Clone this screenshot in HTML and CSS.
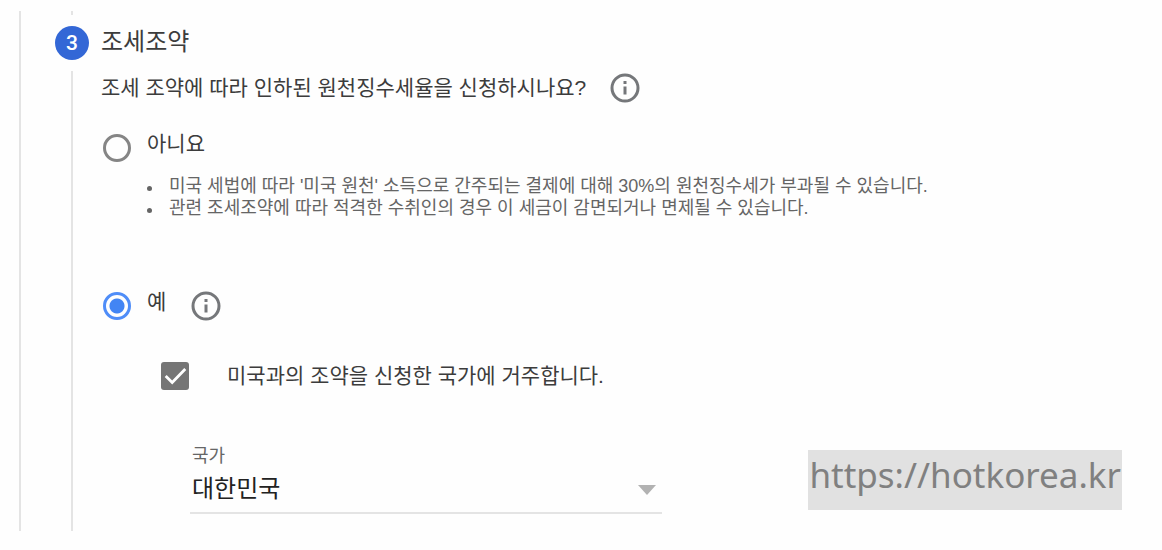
FILE: index.html
```html
<!DOCTYPE html>
<html lang="ko">
<head>
<meta charset="utf-8">
<title>조세조약</title>
<link rel="stylesheet" href="styles.css">
</head>
<body>
<main class="panel">
  <section class="step">
    <div class="rail">
      <span class="rail-line rail-top"></span>
      <span class="step-number">3</span>
      <span class="rail-line rail-rest"></span>
    </div>
    <form class="content">
      <h2 class="title">조세조약</h2>
      <div class="question">
        <span id="question">조세 조약에 따라 인하된 원천징수세율을 신청하시나요?</span>
        <button class="info" type="button" aria-label="도움말">
          <svg viewBox="0 0 30 30"><circle cx="15" cy="15" r="13"/><path d="M15 13.500v8M15 8v3"/></svg>
        </button>
      </div>
      <div class="option">
        <input class="radio" type="radio" name="treaty" id="no">
        <label class="option-label" for="no">아니요</label>
      </div>
      <ul class="notes">
        <li>미국 세법에 따라 '미국 원천' 소득으로 간주되는 결제에 대해 30%의 원천징수세가 부과될 수 있습니다.</li>
        <li>관련 조세조약에 따라 적격한 수취인의 경우 이 세금이 감면되거나 면제될 수 있습니다.</li>
      </ul>
      <div class="option">
        <input class="radio" type="radio" name="treaty" id="yes" checked>
        <label class="option-label" for="yes">예</label>
        <button class="info info-yes" type="button" aria-label="도움말">
          <svg viewBox="0 0 30 30"><circle cx="15" cy="15" r="13"/><path d="M15 13.500v8M15 8v3"/></svg>
        </button>
      </div>
      <div class="resident">
        <span class="check">
          <input class="checkbox" type="checkbox" id="resident" checked>
          <svg class="tick" viewBox="0 0 30 30"><path d="M5 15l7 7L26 7.500"/></svg>
        </span>
        <label for="resident">미국과의 조약을 신청한 국가에 거주합니다.</label>
      </div>
      <div class="field">
        <label class="field-label" for="country">국가</label>
        <div class="select-wrap">
          <select class="select" id="country"><option>대한민국</option></select>
          <svg class="arrow" viewBox="0 0 18 10"><path d="M0 0h18L9 10z"/></svg>
        </div>
      </div>
    </form>
  </section>
</main>
<div class="watermark">https://hotkorea.kr</div>
</body>
</html>
```
FILE: styles.css
```css
* {
  box-sizing: border-box;
}

body {
  margin: 0;
  padding: 11px 40px 19px 19px;
  background: #fefefe;
  color: #3c3c3c;
  font-family: "Liberation Sans", "Noto Sans CJK KR", sans-serif;
  font-size: 21px;
  line-height: 30px;
}

.panel {
  border-left: 2px solid #e4e4e4;
  padding-left: 34px;
}

.step {
  display: flex;
  gap: 12px;
}

.rail {
  display: flex;
  flex-direction: column;
  align-items: center;
  width: 34px;
  flex: none;
}

.rail-line {
  width: 2px;
  background: #e4e4e4;
}

.rail-top {
  height: 4px;
}

.rail-rest {
  flex: 1;
}

.step-number {
  width: 34px;
  height: 34px;
  margin: 11px 0;
  border-radius: 50%;
  background: #3367d6;
  color: #fff;
  font-family: Roboto, sans-serif;
  font-weight: 500;
  line-height: 34px;
  text-align: center;
}

.content {
  flex: 1;
  min-width: 0;
  padding: 15px 0 17px;
}

.title {
  margin: 0;
  font-size: 24px;
  font-weight: 400;
  line-height: 32px;
}

.question {
  display: flex;
  align-items: center;
  gap: 24px;
  margin-top: 15px;
}

.info {
  width: 30px;
  height: 30px;
  padding: 0;
  border: 0;
  background: none;
}

.info svg {
  display: block;
  width: 30px;
  height: 30px;
  fill: none;
  stroke: #75777a;
  stroke-width: 3;
}

.option {
  display: flex;
  align-items: center;
  margin: 26px 0 0 2px;
}

.radio {
  appearance: none;
  width: 28px;
  height: 28px;
  margin: 0;
  border: 3px solid #858585;
  border-radius: 50%;
}

.radio:checked {
  border-color: #4f8df8;
  background: radial-gradient(circle, #4285f4 7px, transparent 8px);
}

.option-label {
  margin-left: 16px;
  padding-bottom: 8px;
}

.info-yes {
  margin-left: 25px;
}

.notes {
  margin: 8px 0 68px;
  padding-left: 46px;
  color: #656565;
  font-size: 18px;
  line-height: 22px;
  list-style: none;
}

.notes li {
  display: flex;
  gap: 17px;
}

.notes li::before {
  content: "";
  flex: none;
  width: 5px;
  height: 5px;
  margin-top: 11px;
  border-radius: 50%;
  background: #656565;
}

.resident {
  display: flex;
  align-items: center;
  gap: 38px;
  margin: 36px 0 0 60px;
}

.check {
  display: grid;
}

.checkbox {
  grid-area: 1 / 1;
  appearance: none;
  width: 28px;
  height: 28px;
  margin: 0;
  border-radius: 3px;
  background: #757575;
}

.tick {
  grid-area: 1 / 1;
  width: 28px;
  height: 28px;
  fill: none;
  stroke: #fff;
  stroke-width: 3;
  pointer-events: none;
}

.field {
  max-width: 472px;
  margin: 53px 0 0 89px;
}

.field-label {
  display: block;
  padding-left: 2px;
  color: #666;
  font-size: 18px;
  line-height: 24px;
}

.select-wrap {
  display: grid;
  align-items: center;
  border-bottom: 2px solid #e4e4e4;
}

.select {
  grid-area: 1 / 1;
  appearance: none;
  width: 100%;
  height: 44px;
  padding: 0 0 2px 2px;
  border: 0;
  background: none;
  color: #222;
  font: inherit;
  font-size: 24px;
}

.arrow {
  grid-area: 1 / 1;
  justify-self: end;
  width: 18px;
  height: 10px;
  margin-right: 6px;
  fill: #b2b2b2;
  pointer-events: none;
}

.watermark {
  position: absolute;
  right: 40px;
  bottom: 40px;
  padding: 0 1px 10px;
  background: #e1e1e1;
  color: #808080;
  font-family: "Noto Sans", sans-serif;
  font-size: 35px;
  line-height: 50px;
}
```
